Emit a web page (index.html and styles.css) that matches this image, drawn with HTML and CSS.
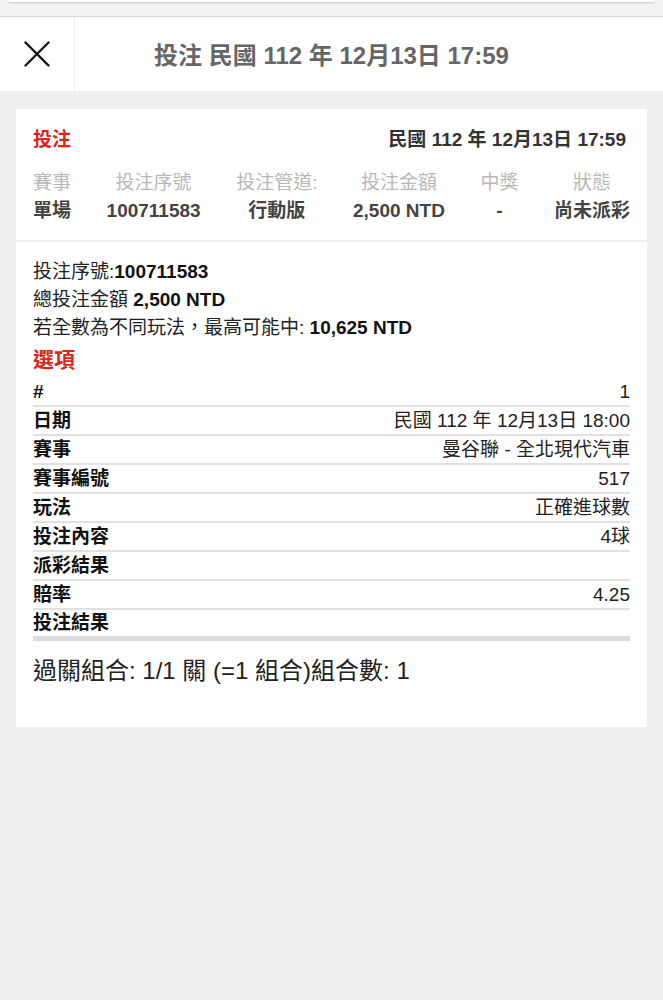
FILE: index.html
```
<!DOCTYPE html>
<html lang="zh-Hant">
<head>
    <meta charset="UTF-8">
    <meta name="viewport" content="width=device-width, initial-scale=1.0">
    <title>投注</title>
    <link rel="stylesheet" href="styles.css">
</head>
<body>
    <div class="top-strip">
        <div class="top-sheet"></div>
    </div>
    <div class="nav-header">
        <div class="close-btn">
            <svg width="26" height="26" viewBox="0 0 26 26">
                <path d="M1.5 1.5 L24.5 24.5 M24.5 1.5 L1.5 24.5" stroke="#111" stroke-width="2.4" stroke-linecap="round" fill="none"/>
            </svg>
        </div>
        <div class="nav-title">投注 民國 112 年 12月13日 17:59</div>
        <div class="nav-spacer"></div>
    </div>

    <div class="content">
        <div class="bet-card">
            <div class="bet-head">
                <span class="bet-type">投注</span>
                <span class="bet-date">民國 112 年 12月13日 17:59</span>
            </div>
            <div class="bet-cols">
                <div class="bet-col"><div class="col-label">賽事</div><div class="col-value">單場</div></div>
                <div class="bet-col"><div class="col-label">投注序號</div><div class="col-value">100711583</div></div>
                <div class="bet-col"><div class="col-label">投注管道:</div><div class="col-value">行動版</div></div>
                <div class="bet-col"><div class="col-label">投注金額</div><div class="col-value">2,500 NTD</div></div>
                <div class="bet-col"><div class="col-label">中獎</div><div class="col-value">-</div></div>
                <div class="bet-col"><div class="col-label">狀態</div><div class="col-value">尚未派彩</div></div>
            </div>
        </div>

        <div class="detail-card">
            <div class="info-line">投注序號:<strong>100711583</strong></div>
            <div class="info-line">總投注金額 <strong>2,500 NTD</strong></div>
            <div class="info-line">若全數為不同玩法，最高可能中: <strong>10,625 NTD</strong></div>
            <div class="section-title">選項</div>
            <table class="sel-table">
                <tbody>
                    <tr><th>#</th><td>1</td></tr>
                    <tr><th>日期</th><td>民國 112 年 12月13日 18:00</td></tr>
                    <tr><th>賽事</th><td>曼谷聯 - 全北現代汽車</td></tr>
                    <tr><th>賽事編號</th><td>517</td></tr>
                    <tr><th>玩法</th><td>正確進球數</td></tr>
                    <tr><th>投注內容</th><td>4球</td></tr>
                    <tr><th>派彩結果</th><td></td></tr>
                    <tr><th>賠率</th><td>4.25</td></tr>
                    <tr class="last"><th>投注結果</th><td></td></tr>
                </tbody>
            </table>
            <div class="combo">過關組合: 1/1 關 (=1 組合)組合數: 1</div>
        </div>
    </div>
</body>
</html>
```

FILE: styles.css
```
body {
    margin: 0;
    background-color: #efefef;
    font-family: "Liberation Sans", "Noto Sans CJK TC", sans-serif;
    color: #222;
}
.top-strip {
    height: 17px;
    background: #f3f3f3;
    border-bottom: 1px solid #d6d6d6;
    box-sizing: border-box;
}
.top-sheet {
    height: 2px;
    margin: 0 8px;
    background: #fff;
    border-radius: 0 0 4px 4px;
    box-shadow: 0 1px 2px rgba(0, 0, 0, 0.18);
}
.nav-header {
    display: grid;
    grid-template-columns: 75px 1fr 75px;
    height: 74px;
    background: #fff;
}
.close-btn {
    display: flex;
    align-items: center;
    justify-content: center;
    border-right: 1px solid #ececec;
}
.nav-title {
    display: flex;
    align-items: center;
    justify-content: center;
    font-size: 24px;
    font-weight: bold;
    color: #666;
    padding-bottom: 1px;
}
.content {
    padding: 18px 16px;
}
.bet-card {
    background: #fff;
    padding: 18px 17px 15px 17px;
}
.bet-head {
    display: flex;
    justify-content: space-between;
    align-items: center;
    line-height: 26px;
    font-size: 19px;
    font-weight: bold;
}
.bet-type {
    color: #e2231a;
}
.bet-date {
    color: #333;
    padding-right: 4px;
}
.bet-cols {
    display: flex;
    justify-content: space-between;
    margin-top: 16px;
    font-size: 19px;
    line-height: 28px;
    text-align: center;
}
.col-label {
    color: #b8b8b8;
}
.col-value {
    color: #444;
    font-weight: bold;
}
.detail-card {
    background: #fff;
    margin-top: 2px;
    padding: 16px 17px 41px 17px;
}
.info-line {
    font-size: 19px;
    line-height: 28px;
    color: #222;
}
.info-line strong {
    color: #111;
}
.section-title {
    color: #e2231a;
    font-size: 21px;
    font-weight: bold;
    line-height: 32px;
    margin-top: 2px;
}
.sel-table {
    width: 100%;
    border-collapse: collapse;
    margin-top: 3px;
    font-size: 19px;
}
.sel-table th,
.sel-table td {
    padding: 0;
    height: 27px;
    line-height: 27px;
    border-bottom: 2px solid #e1e1e1;
}
.sel-table tr:first-child th,
.sel-table tr:first-child td {
    height: 26px;
    line-height: 26px;
}
.sel-table th {
    text-align: left;
    color: #111;
    font-weight: bold;
}
.sel-table td {
    text-align: right;
    color: #222;
}
.sel-table tr.last th,
.sel-table tr.last td {
    height: 26px;
    line-height: 26px;
    border-bottom: 5px solid #dcdcdc;
}
.combo {
    margin-top: 15px;
    font-size: 24px;
    line-height: 30px;
    color: #222;
}
```
